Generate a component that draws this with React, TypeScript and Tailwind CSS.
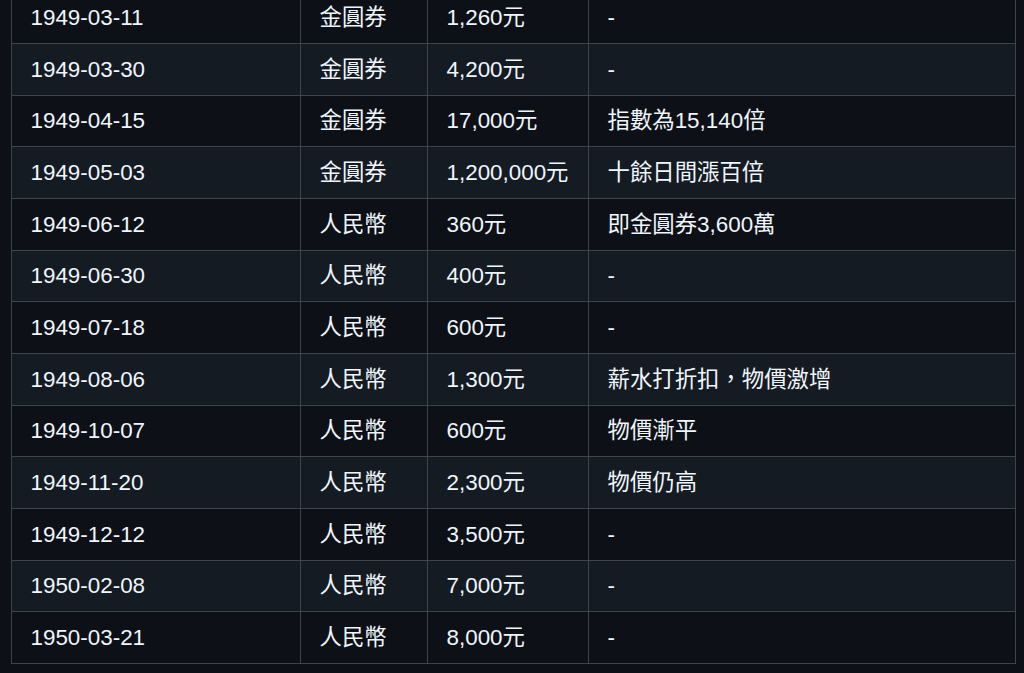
import React from "react";

const rows: [string, string, string, string][] = [
  ["1949-03-11", "金圓券", "1,260元", "-"],
  ["1949-03-30", "金圓券", "4,200元", "-"],
  ["1949-04-15", "金圓券", "17,000元", "指數為15,140倍"],
  ["1949-05-03", "金圓券", "1,200,000元", "十餘日間漲百倍"],
  ["1949-06-12", "人民幣", "360元", "即金圓券3,600萬"],
  ["1949-06-30", "人民幣", "400元", "-"],
  ["1949-07-18", "人民幣", "600元", "-"],
  ["1949-08-06", "人民幣", "1,300元", "薪水打折扣，物價激增"],
  ["1949-10-07", "人民幣", "600元", "物價漸平"],
  ["1949-11-20", "人民幣", "2,300元", "物價仍高"],
  ["1949-12-12", "人民幣", "3,500元", "-"],
  ["1950-02-08", "人民幣", "7,000元", "-"],
  ["1950-03-21", "人民幣", "8,000元", "-"],
];

export default function App() {
  return (
    <div
      className="w-[1024px] h-[673px] overflow-hidden bg-[#0d1117] text-[#f0f6fc]"
      style={{ fontFamily: '"Liberation Sans", "Noto Sans CJK TC", sans-serif' }}
    >
      <div className="pl-[11px] mt-[-8.67px]">
        <table className="table-fixed border-collapse w-[1004px] text-[22.4px] leading-[33px]">
          <colgroup>
            <col className="w-[289px]" />
            <col className="w-[127px]" />
            <col className="w-[161px]" />
            <col className="w-[427px]" />
          </colgroup>
          <tbody>
            {rows.map((r, i) => (
              <tr key={i} className={i % 2 === 0 ? "bg-[#0d1117]" : "bg-[#151b23]"}>
                {r.map((c, j) => (
                  <td
                    key={j}
                    className="border border-[#3d444d] pl-[18.5px] pr-[18px] py-[8.83px] h-[51.67px] text-left align-middle whitespace-nowrap"
                  >
                    {c}
                  </td>
                ))}
              </tr>
            ))}
          </tbody>
        </table>
      </div>
    </div>
  );
}
